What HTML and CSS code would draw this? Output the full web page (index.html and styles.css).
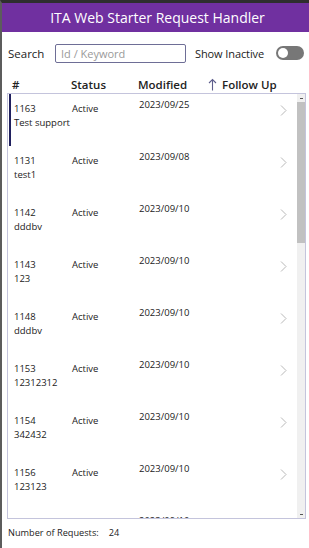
FILE: index.html
```html
<!DOCTYPE html>
<html>
<head>
<meta charset="utf-8">
<link rel="stylesheet" href="styles.css">
</head>
<body>
<div class="app">
  <header class="title">ITA Web Starter Request Handler</header>
  <div class="search-row">
    <span class="search-label">Search</span>
    <input class="search-input" type="text" placeholder="Id / Keyword">
    <span class="inactive-label">Show Inactive</span>
    <span class="toggle"><span class="knob"></span></span>
  </div>
  <div class="cols">
    <span class="c-id">#</span>
    <span class="c-status">Status</span>
    <span class="c-mod">Modified</span>
    <span class="c-follow"><svg class="arrow" width="9" height="13" viewBox="0 0 9 13"><path d="M4.5 1.5 V12.5 M1 5 L4.5 1.5 L8 5" fill="none" stroke="#5e5e8c" stroke-width="1.1"/></svg>Follow Up</span>
  </div>
  <div class="gallery">
    <div class="list">
      <div class="row selected"><div class="r-id"><div>1163</div><div>Test support</div></div><div class="r-status">Active</div><div class="r-date">2023/09/25</div><svg class="chev" width="7" height="11" viewBox="0 0 7 11"><polyline points="1,0.5 6,5.5 1,10.5" fill="none" stroke="#b8b8b8" stroke-width="1"/></svg></div>
      <div class="row"><div class="r-id"><div>1131</div><div>test1</div></div><div class="r-status">Active</div><div class="r-date">2023/09/08</div><svg class="chev" width="7" height="11" viewBox="0 0 7 11"><polyline points="1,0.5 6,5.5 1,10.5" fill="none" stroke="#b8b8b8" stroke-width="1"/></svg></div>
      <div class="row"><div class="r-id"><div>1142</div><div>dddbv</div></div><div class="r-status">Active</div><div class="r-date">2023/09/10</div><svg class="chev" width="7" height="11" viewBox="0 0 7 11"><polyline points="1,0.5 6,5.5 1,10.5" fill="none" stroke="#b8b8b8" stroke-width="1"/></svg></div>
      <div class="row"><div class="r-id"><div>1143</div><div>123</div></div><div class="r-status">Active</div><div class="r-date">2023/09/10</div><svg class="chev" width="7" height="11" viewBox="0 0 7 11"><polyline points="1,0.5 6,5.5 1,10.5" fill="none" stroke="#b8b8b8" stroke-width="1"/></svg></div>
      <div class="row"><div class="r-id"><div>1148</div><div>dddbv</div></div><div class="r-status">Active</div><div class="r-date">2023/09/10</div><svg class="chev" width="7" height="11" viewBox="0 0 7 11"><polyline points="1,0.5 6,5.5 1,10.5" fill="none" stroke="#b8b8b8" stroke-width="1"/></svg></div>
      <div class="row"><div class="r-id"><div>1153</div><div>12312312</div></div><div class="r-status">Active</div><div class="r-date">2023/09/10</div><svg class="chev" width="7" height="11" viewBox="0 0 7 11"><polyline points="1,0.5 6,5.5 1,10.5" fill="none" stroke="#b8b8b8" stroke-width="1"/></svg></div>
      <div class="row"><div class="r-id"><div>1154</div><div>342432</div></div><div class="r-status">Active</div><div class="r-date">2023/09/10</div><svg class="chev" width="7" height="11" viewBox="0 0 7 11"><polyline points="1,0.5 6,5.5 1,10.5" fill="none" stroke="#b8b8b8" stroke-width="1"/></svg></div>
      <div class="row"><div class="r-id"><div>1156</div><div>123123</div></div><div class="r-status">Active</div><div class="r-date">2023/09/10</div><svg class="chev" width="7" height="11" viewBox="0 0 7 11"><polyline points="1,0.5 6,5.5 1,10.5" fill="none" stroke="#b8b8b8" stroke-width="1"/></svg></div>
      <div class="row"><div class="r-id"><div>1157</div></div><div class="r-status">Active</div><div class="r-date">2023/09/10</div></div>
    </div>
    <div class="scrollbar">
      <div class="sb-btn"><span class="sb-mark"></span></div>
      <div class="sb-thumb"></div>
      <div class="sb-track"></div>
      <div class="sb-btn"><span class="sb-mark"></span></div>
    </div>
  </div>
  <div class="footer"><span>Number of Requests:</span><span class="count">24</span></div>
</div>
</body>
</html>
```
FILE: styles.css
```css
html, body {
  margin: 0;
  padding: 0;
  background: #fff;
}
body {
  width: 309px;
  height: 548px;
  overflow: hidden;
  font-family: "Open Sans", "Noto Sans", sans-serif;
  color: #222;
}
.app {
  height: 545px;
  border-top: 3px solid #2e2e2e;
  border-left: 2px solid #5c5c5c;
  display: flex;
  flex-direction: column;
}
.title {
  height: 29px;
  background: #7030a0;
  color: #fff;
  font-size: 14px;
  line-height: 29px;
  text-align: center;
  padding-left: 4px;
}
.search-row {
  display: flex;
  align-items: center;
  margin-top: 11px;
  height: 20px;
  padding-left: 6px;
  white-space: nowrap;
}
.search-label {
  font-size: 11.5px;
  width: 47px;
}
.search-input {
  box-sizing: border-box;
  width: 131px;
  height: 19px;
  border: 1px solid #6e6e96;
  border-radius: 2px;
  padding: 0 5px;
  font-family: inherit;
  font-size: 11px;
  color: #333;
  outline: none;
}
.search-input::placeholder {
  color: #9a9a9a;
}
.inactive-label {
  font-size: 11px;
  margin-left: 9px;
  letter-spacing: -0.1px;
}
.toggle {
  margin-left: 12px;
  width: 28px;
  height: 14px;
  border-radius: 7px;
  background: #777;
  display: flex;
  align-items: center;
  padding-left: 2px;
  box-sizing: border-box;
}
.knob {
  width: 10px;
  height: 10px;
  border-radius: 50%;
  background: #fff;
}
.cols {
  display: flex;
  align-items: center;
  height: 16px;
  margin-top: 13px;
  font-size: 11.5px;
  font-weight: 600;
  color: #222;
  white-space: nowrap;
}
.c-id { width: 69px; padding-left: 10px; box-sizing: border-box; }
.c-status { width: 67px; }
.c-mod { width: 70px; }
.c-follow {
  display: flex;
  align-items: center;
}
.arrow {
  margin-right: 5px;
}
.gallery {
  margin-top: 1px;
  margin-left: 5px;
  width: 299px;
  height: 426px;
  box-sizing: border-box;
  border: 1px solid #c4c4dc;
  display: flex;
}
.list {
  flex: 1;
  overflow: hidden;
  padding-left: 1px;
}
.row {
  height: 52px;
  box-sizing: border-box;
  display: flex;
  align-items: flex-start;
  padding-top: 8px;
  border-left: 2px solid transparent;
  font-size: 9.5px;
  line-height: 14px;
  color: #222;
}
.row.selected {
  border-left-color: #20205e;
}
.r-id {
  width: 58px;
  padding-left: 3px;
  white-space: nowrap;
}
.r-status {
  width: 67px;
}
.r-date {
  width: 141px;
  margin-top: -4px;
}
.chev {
  margin-top: 3px;
}
.scrollbar {
  width: 8px;
  display: flex;
  flex-direction: column;
  background: #f0f0f0;
}
.sb-btn {
  height: 8px;
  display: flex;
  align-items: center;
  justify-content: center;
}
.sb-mark {
  width: 3px;
  height: 1px;
  background: #555;
}
.sb-thumb {
  height: 141px;
  background: #c1c1c1;
}
.sb-track {
  flex: 1;
}
.footer {
  display: flex;
  font-size: 9.2px;
  margin-top: 7px;
  padding-left: 6px;
  color: #222;
  white-space: nowrap;
}
.count {
  margin-left: 10px;
}
```
